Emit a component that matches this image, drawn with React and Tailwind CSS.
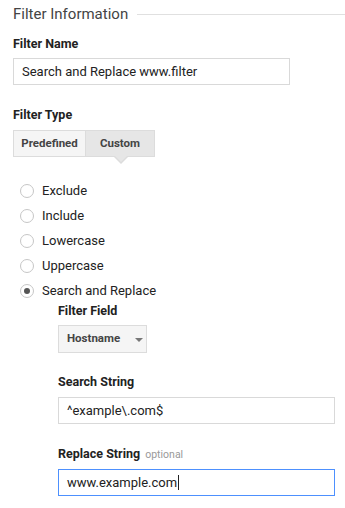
const font = { fontFamily: 'Roboto, "Liberation Sans", sans-serif' };

function Label({ children }) {
  return <div className="text-[12.5px] leading-4 font-bold text-[#222]">{children}</div>;
}

function TextBox({ value, focused }) {
  return (
    <div
      className={`w-[277px] h-[27px] flex items-center px-[8px] text-[13px] text-[#222] bg-white border ${
        focused ? 'border-[#4d90fe]' : 'border-[#d9d9d9]'
      }`}
    >
      {value}
      {focused && <span className="w-px h-[15px] bg-[#222] ml-px" />}
    </div>
  );
}

function Radio({ label, checked }) {
  return (
    <div className="h-[25px] flex items-center">
      <span className="w-[14px] h-[14px] ml-[7px] mr-[8px] rounded-full border border-[#c6c6c6] bg-white flex items-center justify-center">
        {checked && <span className="w-[6px] h-[6px] rounded-full bg-[#555]" />}
      </span>
      <span className="text-[13px] text-[#222]">{label}</span>
    </div>
  );
}

export default function App() {
  return (
    <div className="w-[345px] h-[508px] bg-white pl-[13px] pt-[4px] overflow-hidden" style={font}>
      <div className="flex items-center h-5">
        <span className="text-[15px] text-[#444]">Filter Information</span>
        <span className="flex-1 h-px bg-[#e0e0e0] ml-[9px]" />
      </div>

      <div className="mt-[12px]">
        <Label>Filter Name</Label>
        <div className="mt-[6px]">
          <TextBox value="Search and Replace www.filter" />
        </div>
      </div>

      <div className="mt-[22px]">
        <Label>Filter Type</Label>
        <div className="mt-[7px] relative flex w-[142px] h-[27px] border border-[#dcdcdc] text-[11.5px] font-bold text-[#444]">
          <div className="w-[71px] bg-[#f5f5f5] flex items-center justify-center">Predefined</div>
          <div className="flex-1 bg-[#e6e6e6] border-l border-[#dcdcdc] flex items-center justify-center">Custom</div>
          <span className="absolute left-[100px] top-[26px] w-0 h-0 border-l-[7px] border-r-[7px] border-t-[7px] border-l-transparent border-r-transparent border-t-[#dcdcdc]" />
          <span className="absolute left-[101px] top-[25px] w-0 h-0 border-l-[6px] border-r-[6px] border-t-[6px] border-l-transparent border-r-transparent border-t-[#e6e6e6]" />
        </div>
      </div>

      <div className="mt-[21px]">
        <Radio label="Exclude" />
        <Radio label="Include" />
        <Radio label="Lowercase" />
        <Radio label="Uppercase" />
        <Radio label="Search and Replace" checked />
      </div>

      <div className="pl-[45px]">
        <Label>Filter Field</Label>
        <div className="mt-[6px] w-[89px] h-[28px] border border-[#dcdcdc] bg-[#f5f5f5] flex items-center pl-[8px] text-[11.5px] font-bold text-[#444]">
          <span>Hostname</span>
          <span className="ml-[15px] mt-px w-0 h-0 border-l-[4px] border-r-[4px] border-t-[4px] border-l-transparent border-r-transparent border-t-[#777]" />
        </div>

        <div className="mt-[21px]">
          <Label>Search String</Label>
          <div className="mt-[7px]">
            <TextBox value="^example\.com$" />
          </div>
        </div>

        <div className="mt-[22px]">
          <Label>
            Replace String <span className="text-[10.5px] font-normal text-[#999] ml-[2px]">optional</span>
          </Label>
          <div className="mt-[6px]">
            <TextBox value="www.example.com" focused />
          </div>
        </div>
      </div>
    </div>
  );
}
